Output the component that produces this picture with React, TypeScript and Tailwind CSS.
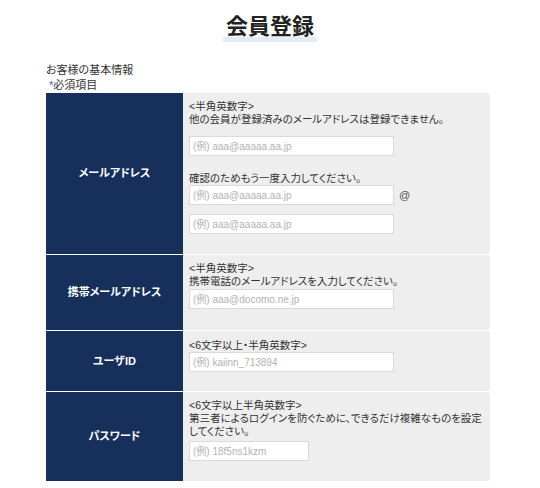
import React from "react";

const font = {
  fontFamily: '"Liberation Sans", "Noto Sans CJK JP", sans-serif',
  fontFeatureSettings: '"palt"',
};

// Input renders a white text field with a gray placeholder.
const Input = ({ placeholder, width = "w-[205px]" }: { placeholder: string; width?: string }) => (
  <input
    placeholder={placeholder}
    className={`${width} h-[20px] border border-[#dadada] bg-white px-[3px] text-[10px] text-[#333] outline-none placeholder:text-[#b3b3b3]`}
  />
);

// Row is one line of the form table: navy label and gray content cell.
const Row = ({ label, children, className }: { label: string; children: React.ReactNode; className: string }) => (
  <div className="flex mb-[1px]">
    <div className="w-[137px] shrink-0 bg-[#17305b] flex items-center justify-center text-[11px] font-bold text-white">
      {label}
    </div>
    <div className={`min-w-0 flex-1 bg-[#eeeeee] rounded-r-[3px] pl-[6px] text-[10.5px] leading-[13px] text-[#333] ${className}`}>
      {children}
    </div>
  </div>
);

export default function App() {
  return (
    <div className="w-[540px] h-[488px] bg-white" style={font}>
      <div className="h-[48px] pt-[12px] flex justify-center">
        <span className="inline-block h-[30px] px-[3px] text-[22px] leading-[30px] font-bold text-[#222] bg-[linear-gradient(transparent_83%,#e3ebf6_83%)]">
          会員登録
        </span>
      </div>

      <div className="px-[46px]">
        <div className="pt-[15px] text-[11px] leading-[15px] text-[#333]">
          <p>お客様の基本情報</p>
          <p className="pl-[3px]">
            <span className="text-[#2a6bd1]">*</span>必須項目
          </p>
        </div>

        <div className="w-[444px]">
          {/* Email address */}
          <Row label="メールアドレス" className="pt-[7px] pb-[20px]">
            <p>&lt;半角英数字&gt;</p>
            <p>他の会員が登録済みのメールアドレスは登録できません。</p>
            <div className="mt-[10px]">
              <Input placeholder="(例) aaa@aaaaa.aa.jp" />
            </div>
            <p className="mt-[16px]">確認のためもう一度入力してください。</p>
            <div className="flex items-center gap-[5px]">
              <Input placeholder="(例) aaa@aaaaa.aa.jp" />
              <span className="text-[11px] text-[#555]">@</span>
            </div>
            <div className="mt-[9px]">
              <Input placeholder="(例) aaa@aaaaa.aa.jp" />
            </div>
          </Row>

          {/* Mobile email */}
          <Row label="携帯メールアドレス" className="pt-[7px] pb-[21px]">
            <p>&lt;半角英数字&gt;</p>
            <p>携帯電話のメールアドレスを入力してください。</p>
            <div className="mt-[1px]">
              <Input placeholder="(例) aaa@docomo.ne.jp" />
            </div>
          </Row>

          {/* User ID */}
          <Row label="ユーザID" className="pt-[8px] pb-[19px]">
            <p>&lt;6文字以上・半角英数字&gt;</p>
            <Input placeholder="(例) kaiinn_713894" />
          </Row>

          {/* Password */}
          <Row label="パスワード" className="pt-[7px] pb-[20px]">
            <p>&lt;6文字以上半角英数字&gt;</p>
            <p>
              第三者によるログインを防ぐために、できるだけ複雑なものを設定
              <br />
              してください。
            </p>
            <div className="mt-[3px]">
              <Input placeholder="(例) 18f5ns1kzm" width="w-[120px]" />
            </div>
          </Row>
        </div>
      </div>
    </div>
  );
}
